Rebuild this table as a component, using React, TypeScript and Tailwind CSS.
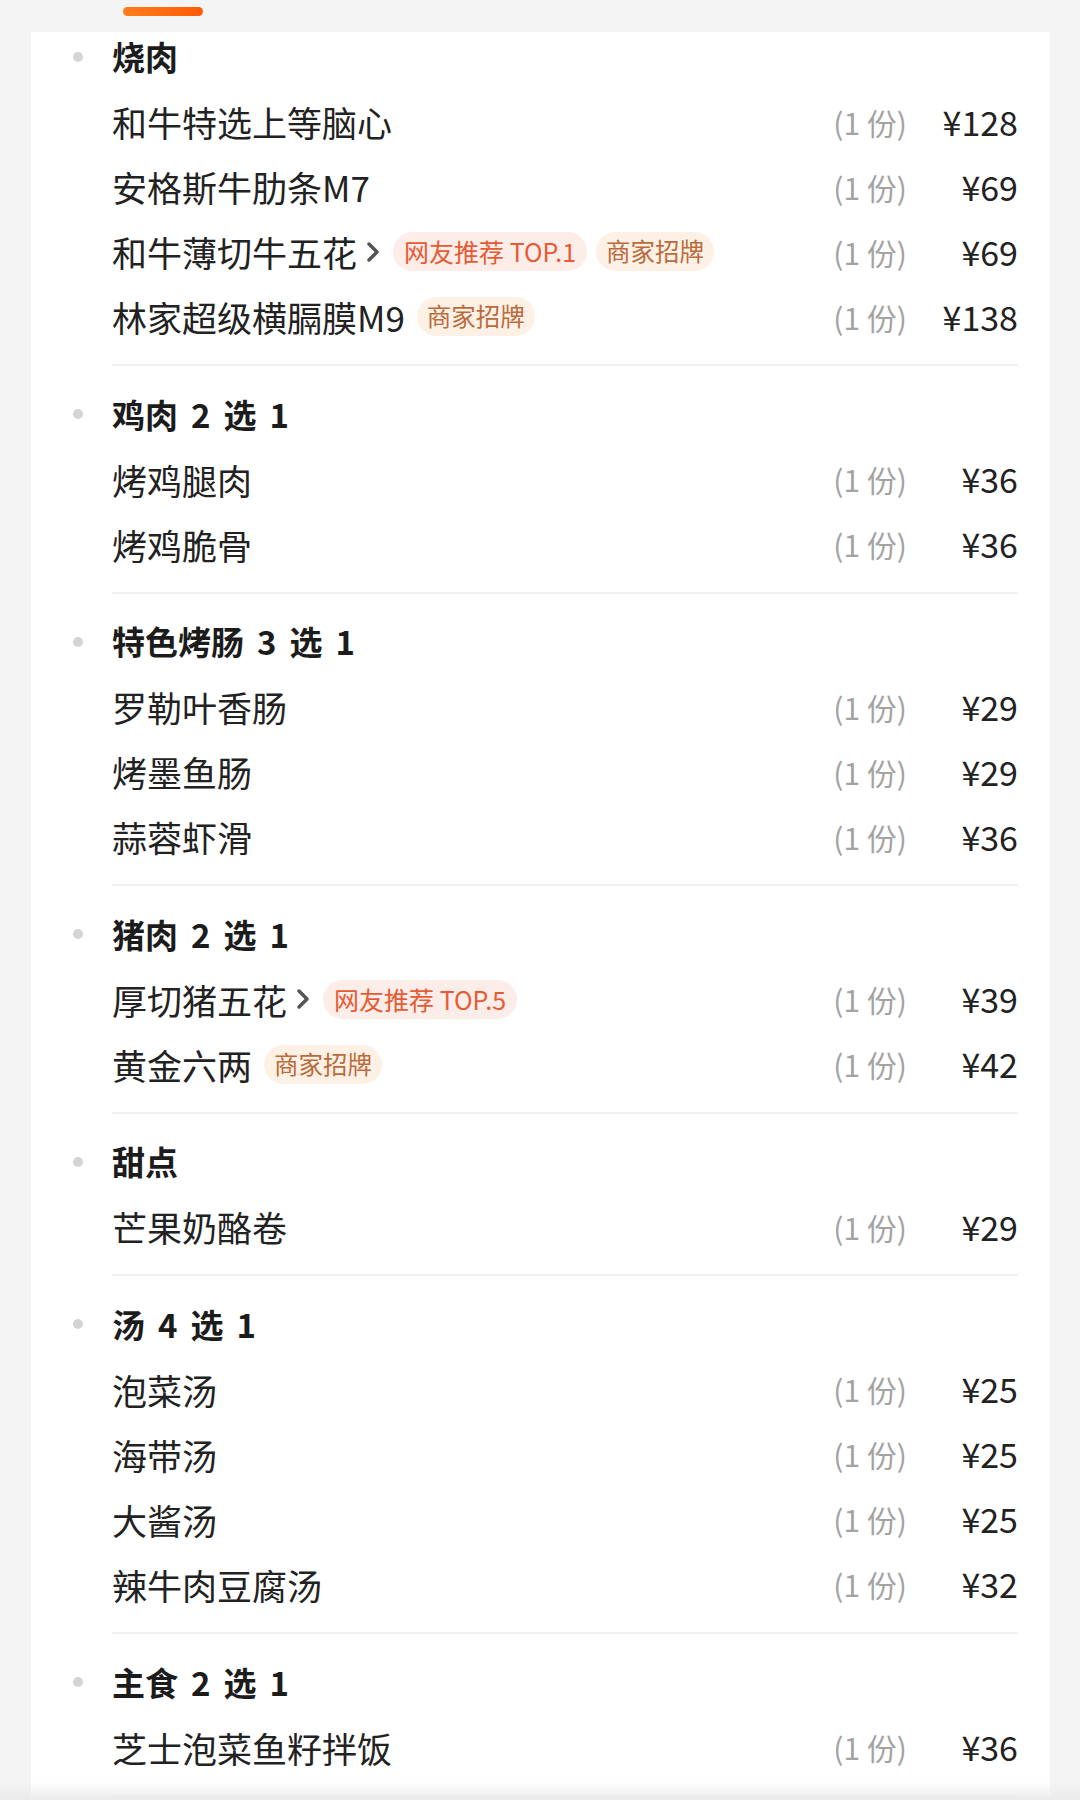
import React from "react";

type Tag = "hot1" | "hot5" | "sign";

interface Item {
  name: string;
  price: number;
  more?: boolean;
  tags?: Tag[];
}

interface Section {
  title: string;
  items: Item[];
}

const sections: Section[] = [
  {
    title: "烧肉",
    items: [
      { name: "和牛特选上等脑心", price: 128 },
      { name: "安格斯牛肋条M7", price: 69 },
      { name: "和牛薄切牛五花", price: 69, more: true, tags: ["hot1", "sign"] },
      { name: "林家超级横膈膜M9", price: 138, tags: ["sign"] },
    ],
  },
  {
    title: "鸡肉 2 选 1",
    items: [
      { name: "烤鸡腿肉", price: 36 },
      { name: "烤鸡脆骨", price: 36 },
    ],
  },
  {
    title: "特色烤肠 3 选 1",
    items: [
      { name: "罗勒叶香肠", price: 29 },
      { name: "烤墨鱼肠", price: 29 },
      { name: "蒜蓉虾滑", price: 36 },
    ],
  },
  {
    title: "猪肉 2 选 1",
    items: [
      { name: "厚切猪五花", price: 39, more: true, tags: ["hot5"] },
      { name: "黄金六两", price: 42, tags: ["sign"] },
    ],
  },
  {
    title: "甜点",
    items: [{ name: "芒果奶酪卷", price: 29 }],
  },
  {
    title: "汤 4 选 1",
    items: [
      { name: "泡菜汤", price: 25 },
      { name: "海带汤", price: 25 },
      { name: "大酱汤", price: 25 },
      { name: "辣牛肉豆腐汤", price: 32 },
    ],
  },
  {
    title: "主食 2 选 1",
    items: [{ name: "芝士泡菜鱼籽拌饭", price: 36 }],
  },
];

function TagPill({ tag }: { tag: Tag }) {
  if (tag === "sign") {
    return (
      <span className="h-[39px] px-[10px] rounded-full bg-[#fdf1e5] text-[#bb6a3c] text-[24.5px] leading-none flex items-center">
        商家招牌
      </span>
    );
  }
  return (
    <span className="h-[39px] px-[11px] rounded-full bg-[#fdede8] text-[#e65b34] text-[25px] leading-none flex items-center">
      网友推荐 {tag === "hot1" ? "TOP.1" : "TOP.5"}
    </span>
  );
}

function Chevron() {
  return (
    <svg width="16" height="24" viewBox="0 0 16 24" className="ml-[8px]">
      <polyline
        points="4,4 12,12 4,20"
        fill="none"
        stroke="#555"
        strokeWidth="3.5"
        strokeLinecap="round"
        strokeLinejoin="round"
      />
    </svg>
  );
}

function ItemRow({ item }: { item: Item }) {
  return (
    <div className="h-[65px] flex items-center">
      <span className="text-[35px] leading-none text-[#222]">{item.name}</span>
      {item.more && <Chevron />}
      {item.tags && (
        <div className="flex items-center gap-[9px] ml-[12px]">
          {item.tags.map((t) => (
            <TagPill key={t} tag={t} />
          ))}
        </div>
      )}
      <div className="flex-1" />
      <span className="text-[30px] leading-none text-[#a3a3a3]">(1 份)</span>
      <span className="w-[111px] text-right text-[34px] leading-none text-[#222]">
        ¥{item.price}
      </span>
    </div>
  );
}

export default function App() {
  return (
    <div className="relative h-[1800px] overflow-hidden bg-[#f4f4f4] font-['Noto_Sans_CJK_SC','Noto_Sans',sans-serif]">
      <div className="h-[32px] pl-[123px] pt-[7px]">
        <div className="w-[80px] h-[9px] rounded-full bg-gradient-to-r from-[#ff7c1c] to-[#ff5a05]" />
      </div>
      <div className="mx-[30px] ml-[31px] bg-white overflow-hidden pl-[42px] pr-[32px]">
        <div className="-mt-[8px]">
          {sections.map((s, i) => (
            <div key={s.title} className={`flex ${i === 0 ? "" : "pt-[15.6px]"}`}>
              <div className="w-[39px] shrink-0 h-[65px] flex items-center">
                <span className="w-[10px] h-[10px] rounded-full bg-[#d4d4d4]" />
              </div>
              <div className="flex-1 border-b-2 border-[#f0f0f0] pb-[15px]">
                <div className="h-[65px] flex items-center gap-[13px] text-[33px] font-bold leading-none text-[#1c1c1c]">
                  {s.title.split(" ").map((w, j) => (
                    <span key={j}>{w}</span>
                  ))}
                </div>
                {s.items.map((it) => (
                  <ItemRow key={it.name} item={it} />
                ))}
              </div>
            </div>
          ))}
        </div>
      </div>
      <div className="absolute left-0 right-0 bottom-0 h-[18px] bg-gradient-to-b from-[#ffffff00] to-[#ebebeb]" />
    </div>
  );
}
